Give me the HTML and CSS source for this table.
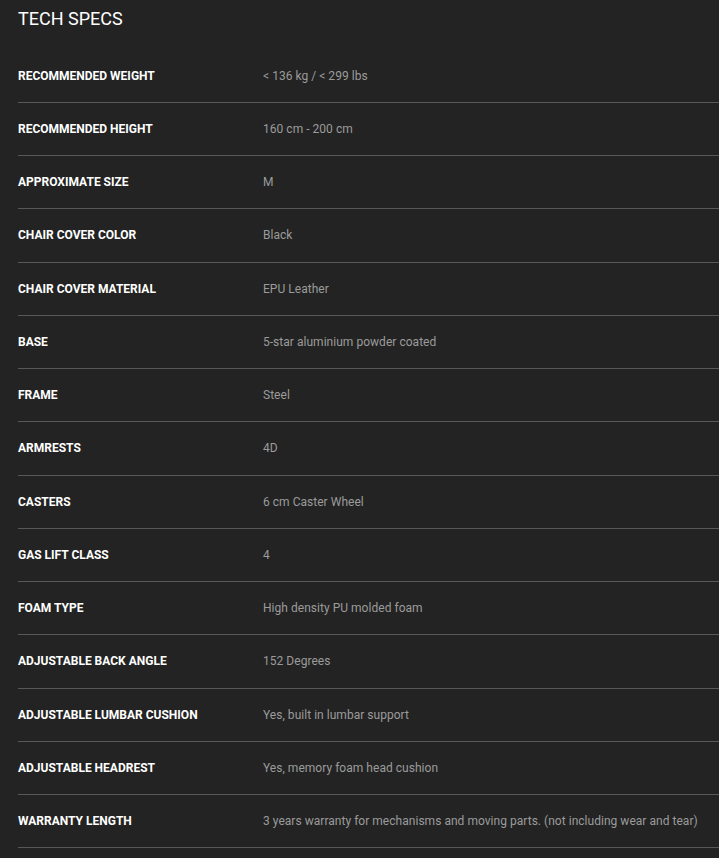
FILE: index.html
```html
<!DOCTYPE html>
<html lang="en">
<head>
<meta charset="utf-8">
<title>Tech Specs</title>
<link rel="stylesheet" href="styles.css">
</head>
<body>
<section class="specs">
  <h2 class="specs-title">TECH SPECS</h2>
  <dl class="spec-list">
    <div class="spec-row"><dt>RECOMMENDED WEIGHT</dt><dd>&lt; 136 kg / &lt; 299 lbs</dd></div>
    <div class="spec-row"><dt>RECOMMENDED HEIGHT</dt><dd>160 cm - 200 cm</dd></div>
    <div class="spec-row"><dt>APPROXIMATE SIZE</dt><dd>M</dd></div>
    <div class="spec-row"><dt>CHAIR COVER COLOR</dt><dd>Black</dd></div>
    <div class="spec-row"><dt>CHAIR COVER MATERIAL</dt><dd>EPU Leather</dd></div>
    <div class="spec-row"><dt>BASE</dt><dd>5-star aluminium powder coated</dd></div>
    <div class="spec-row"><dt>FRAME</dt><dd>Steel</dd></div>
    <div class="spec-row"><dt>ARMRESTS</dt><dd>4D</dd></div>
    <div class="spec-row"><dt>CASTERS</dt><dd>6 cm Caster Wheel</dd></div>
    <div class="spec-row"><dt>GAS LIFT CLASS</dt><dd>4</dd></div>
    <div class="spec-row"><dt>FOAM TYPE</dt><dd>High density PU molded foam</dd></div>
    <div class="spec-row"><dt>ADJUSTABLE BACK ANGLE</dt><dd>152 Degrees</dd></div>
    <div class="spec-row"><dt>ADJUSTABLE LUMBAR CUSHION</dt><dd>Yes, built in lumbar support</dd></div>
    <div class="spec-row"><dt>ADJUSTABLE HEADREST</dt><dd>Yes, memory foam head cushion</dd></div>
    <div class="spec-row"><dt>WARRANTY LENGTH</dt><dd>3 years warranty for mechanisms and moving parts. (not including wear and tear)</dd></div>
  </dl>
</section>
</body>
</html>
```

FILE: styles.css
```css
html, body {
  margin: 0;
  padding: 0;
  background: #232323;
}
body {
  font-family: Roboto, "Liberation Sans", Arial, sans-serif;
  color: #ffffff;
  overflow: hidden;
}
.specs {
  padding: 8px 0 0 18px;
}
.specs-title {
  margin: 0;
  font-size: 18px;
  font-weight: 400;
  line-height: 22px;
  color: #ffffff;
}
.spec-list {
  margin: 19.5px 0 0 0;
  padding: 0;
}
.spec-row {
  display: grid;
  grid-template-columns: 245px 1fr;
  align-items: center;
  height: 52.25px;
  border-bottom: 1px solid #58585a;
}
.spec-row dt {
  margin: 0;
  font-size: 12px;
  font-weight: 700;
  color: #ffffff;
}
.spec-row dd {
  margin: 0;
  font-size: 12px;
  font-weight: 400;
  color: #9b9b9b;
  letter-spacing: 0.03px;
  white-space: nowrap;
}
```
